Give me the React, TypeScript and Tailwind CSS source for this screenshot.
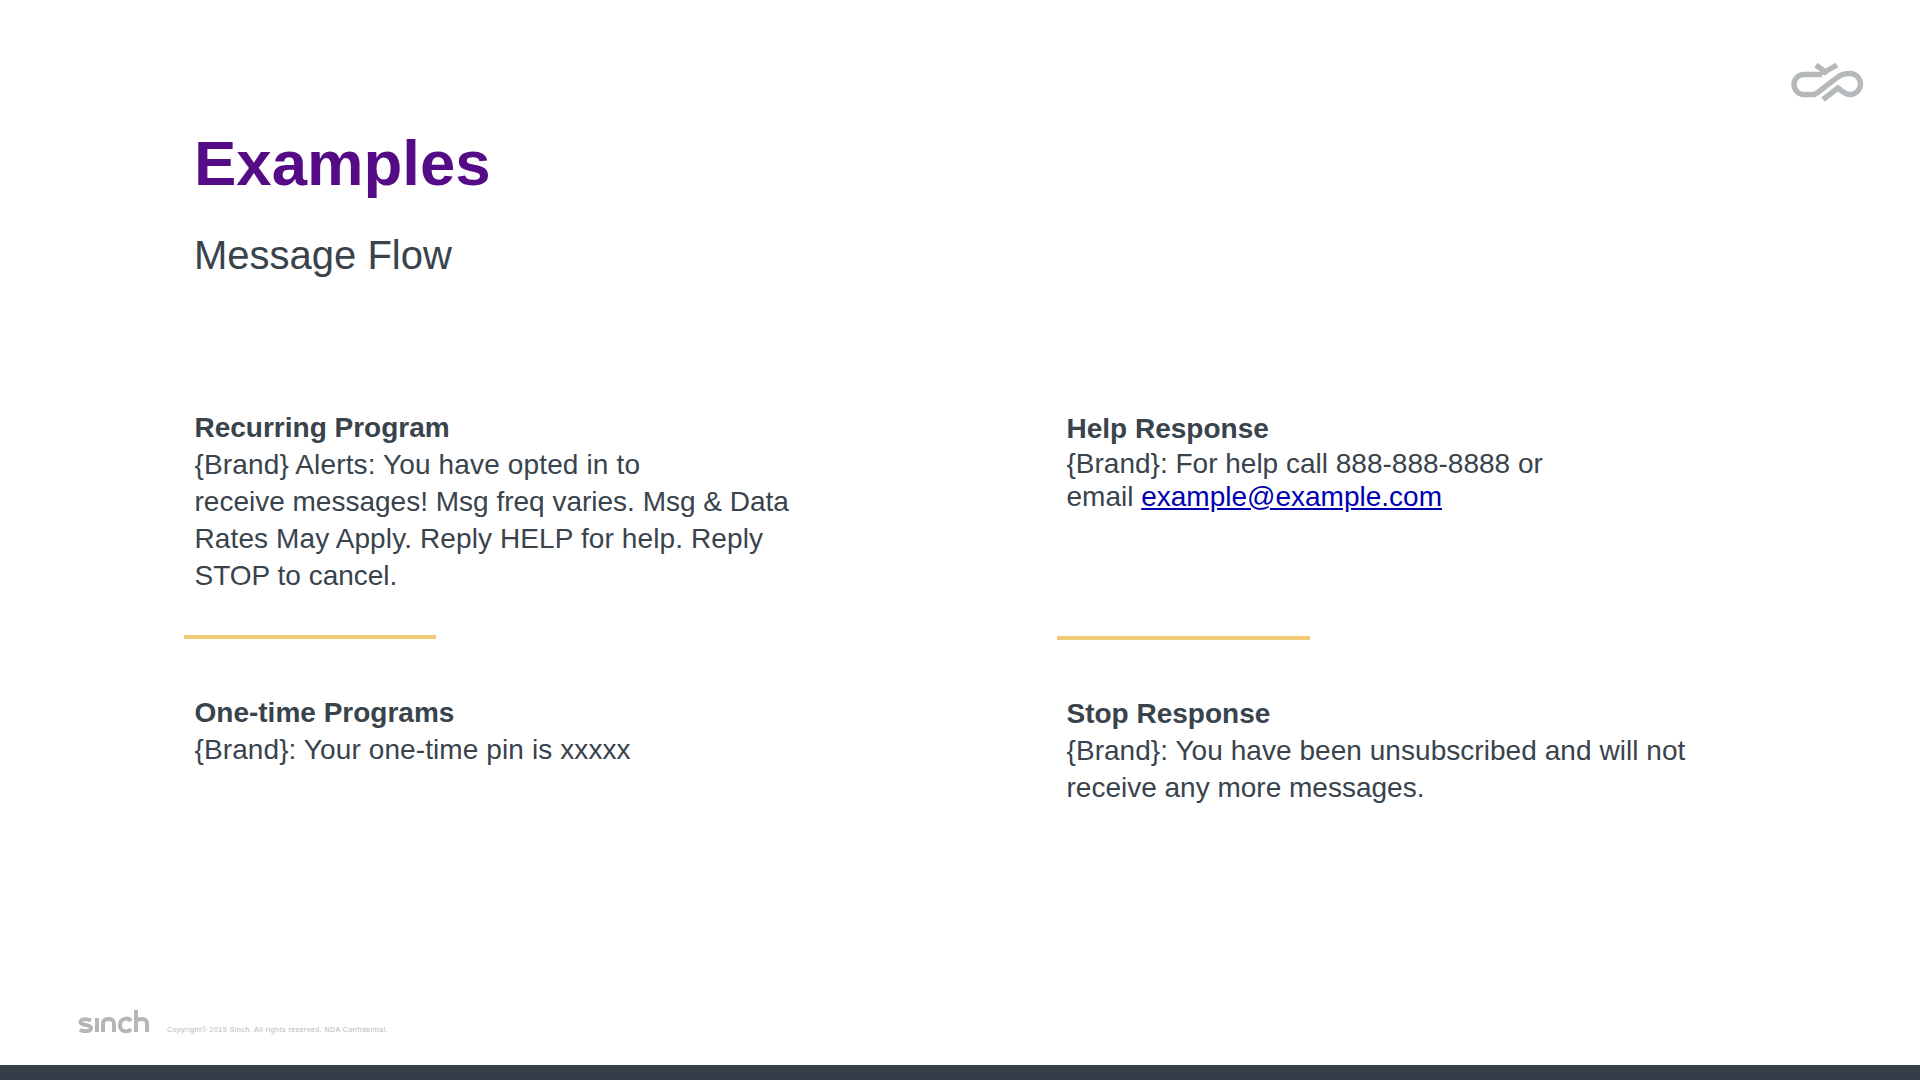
export default function App() {
  return (
    <div className="w-[1920px] h-[1080px] flex flex-col bg-white text-[#39434c] font-['Liberation_Sans',Arial,sans-serif] overflow-hidden">
      <div className="flex-1 flex flex-col min-h-0">
        <header className="flex justify-end h-[120px] pt-[40px] pr-[40px]">
          <svg viewBox="0 0 120 80" width="120" height="80">
            <g fill="none" stroke="#b6b9bb" strokeWidth="5.4">
              <path d="M62 34.5 H44 A10 10 0 0 0 44 54.5 H53 C56 54.5 57 53 59 51.5 L76 38.5 C79 36 82 33.5 90 33.5 A10.5 10.5 0 0 1 90 54.5 C85 54.5 82 51 78 48 L63 59.5" />
              <path d="M56 25 L64 31 V35 M77 25 L63 33" />
            </g>
          </svg>
        </header>
        <div className="pl-[194px] mt-[5px]">
          <h1 className="text-[63.5px] leading-[76px] font-bold text-[#550b85]">Examples</h1>
          <p className="text-[40px] leading-[48px] mt-[30px]">Message Flow</p>
        </div>
        <div className="grid grid-cols-[872px_1fr] pl-[194.5px] mt-[130px]">
          <div>
            <div className="text-[28px] leading-[37px] h-[218px]">
              <div className="font-bold">Recurring Program</div>
              <div className="tracking-[0.14px]">{"{Brand} Alerts: You have opted in to"}</div>
              <div>receive messages! Msg freq varies. Msg &amp; Data</div>
              <div className="tracking-[0.11px]">Rates May Apply. Reply HELP for help. Reply</div>
              <div>STOP to cancel.</div>
            </div>
            <div className="-ml-[11px] mt-[8px] h-[4px] w-[252px] bg-[#f0ca75]" />
            <div className="text-[28px] leading-[37px] mt-[55px]">
              <div className="font-bold">One-time Programs</div>
              <div className="tracking-[0.1px]">{"{Brand}: Your one-time pin is xxxxx"}</div>
            </div>
          </div>
          <div>
            <div className="text-[28px] leading-[33px] h-[218px] pt-[3px]">
              <div className="font-bold">Help Response</div>
              <div className="mt-[2px]">{"{Brand}: For help call 888-888-8888 or"}</div>
              <div>email <a className="text-[#0000b0] underline" href="#">example@example.com</a></div>
            </div>
            <div className="-ml-[10px] mt-[9px] h-[4px] w-[253px] bg-[#f0ca75]" />
            <div className="text-[28px] leading-[37px] mt-[55px]">
              <div className="font-bold">Stop Response</div>
              <div className="tracking-[0.05px]">{"{Brand}: You have been unsubscribed and will not"}</div>
              <div>receive any more messages.</div>
            </div>
          </div>
        </div>
        <footer className="mt-auto flex items-end pl-[78px] pb-[32px]">
          <svg viewBox="0 0 72 24" width="72" height="24">
            <g fill="none" stroke="#b4b6b8" strokeWidth="4">
              <path d="M13 11.5 C9 9.5 3 9.5 2.5 13 C2.5 17 13 15 13 19 C13 23 5 23 2 20.5" />
              <path d="M19 9 V23" />
              <path d="M25 23 V14 C25 8.5 36 8.5 36 14 V23" />
              <path d="M53 12 C50 8 42 9 42 16 C42 23 50 24 53 20" />
              <path d="M58 1 V23 M58 14 C58 8.5 69 8.5 69 14 V23" />
            </g>
          </svg>
          <span className="ml-[17px] -mb-[2px] text-[7px] leading-[10px] tracking-[0.5px] text-[#b4b6b8]">Copyright© 2019 Sinch. All rights reserved. NDA Confidential.</span>
        </footer>
      </div>
      <div className="h-[15px] bg-[#333e48]" />
    </div>
  );
}
